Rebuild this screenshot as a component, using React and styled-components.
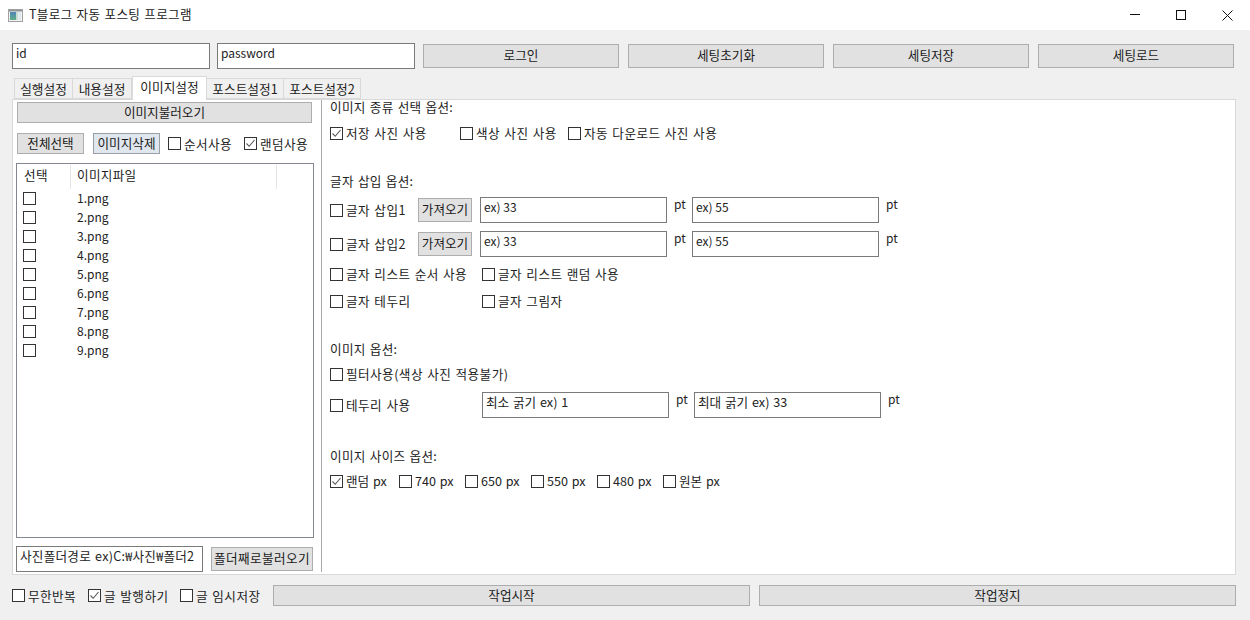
import React from "react";
import styled, { createGlobalStyle } from "styled-components";

const Global = createGlobalStyle`
  html, body { margin: 0; padding: 0; background: #f0f0f0; }
  * { box-sizing: border-box; }
  body { font-family: "Noto Sans CJK KR", "Noto Sans", sans-serif; font-size: 12.6px; color: #111; }
`;

const Window = styled.div`
  width: 1250px; height: 620px; overflow: hidden; background: #f0f0f0;
  display: flex; flex-direction: column; line-height: 16px;
`;
const TitleBar = styled.header`
  height: 30px; background: #fff; display: flex; align-items: center; padding-left: 8px;
`;
const TitleText = styled.span`
  margin-left: 6px; flex: 1; font-size: 12.6px; color: #222; letter-spacing: 0.3px; word-spacing: 1px;
  padding-bottom: 2px;
`;
const Ctrl = styled.span`
  width: 46px; height: 30px; display: flex; align-items: center; justify-content: center;
`;
const TopBar = styled.div`
  display: flex; align-items: center; margin-top: 13px; padding-left: 12px; height: 26px;
`;
const Field = styled.div`
  width: ${p => p.$w}px; height: 26px; flex: none; background: #fff; border: 1px solid #7a7a7a;
  padding: 1px 3px; margin-left: ${p => p.$ml || 0}px;
  font-size: ${p => p.$ko ? 12.6 : 12}px; letter-spacing: ${p => p.$ls || 0}px; word-spacing: ${p => p.$ko ? 1 : 0}px;
  line-height: 16px; color: #222; white-space: nowrap; overflow: hidden;
`;
const Btn = styled.button`
  width: ${p => p.$w}px; height: ${p => p.$h}px; flex: none; margin: 0 0 0 ${p => p.$ml || 0}px; padding: 0 0 1px;
  background: ${p => p.$focus ? "#dfe6ee" : "#e1e1e1"}; border: ${p => p.$focus ? "1px solid #9a9fa6" : "1px solid #adadad"};
  font: inherit; color: #1a1a1a; white-space: nowrap; display: block; line-height: 1;
  letter-spacing: ${p => p.$ls || 0}px;
`;
const TabBar = styled.div`
  display: flex; align-items: flex-end; height: 23px; margin-top: 7px; padding-left: 14px; font-size: 12.7px;
`;
const Tab = styled.div`
  width: ${p => p.$w}px; height: ${p => p.$active ? 24 : 21}px; flex: none; text-align: center;
  background: ${p => p.$active ? "#fff" : "#f0f0f0"}; border: 1px solid #d9d9d9;
  border-bottom: ${p => p.$active ? "none" : "1px solid #d9d9d9"}; border-left-width: ${p => p.$first || p.$active ? 1 : 0}px;
  line-height: ${p => p.$active ? 20 : 19}px; margin-bottom: ${p => p.$active ? -1 : 0}px;
  position: relative; z-index: ${p => p.$active ? 1 : 0}; color: #222;
`;
const Pane = styled.main`
  width: 1224px; height: 476px; margin-left: 12px; background: #fff; border: 1px solid #d9d9d9; display: flex;
`;
const LeftCol = styled.section`
  width: 309px; height: 472px; flex: none; border-right: 1px solid #a9a9a9; padding: 2px 0 0 3px;
  display: flex; flex-direction: column;
`;
const ActionRow = styled.div`
  display: flex; align-items: center; height: 21px; margin: 10px 0 0 1px;
`;
const ActionChecks = styled.div`
  display: flex; align-items: center; margin-left: 8px;
`;
const Table = styled.div`
  width: 298px; height: 375px; margin-top: 9px; border: 1px solid #828790; padding-top: 1px;
`;
const HeadRow = styled.div`
  display: grid; grid-template-columns: 54px 206px 1fr; height: 24px;
`;
const HeadCell = styled.div`
  border-right: 1px solid #e5e5e5; padding-left: ${p => p.$pl}px; line-height: 20px; color: #222;
  letter-spacing: 0.3px;
`;
const FileRow = styled.div`
  display: grid; grid-template-columns: 54px 1fr; height: 19px; padding-left: 6px; align-items: center;
`;
const FileName = styled.span`
  font-size: 12px; color: #222; line-height: 15px; height: 17px;
`;
const FolderRow = styled.div`
  display: flex; align-items: center; margin-top: 8px;
`;
const RightCol = styled.section`
  flex: 1; padding-left: 8px; display: flex; flex-direction: column;
`;
const Heading = styled.div`
  height: 16px; margin-top: ${p => p.$mt}px; color: #222; line-height: 16px;
  letter-spacing: 0.3px; word-spacing: 1px;
`;
const Row = styled.div`
  display: flex; align-items: center; height: ${p => p.$h || 16}px; margin-top: ${p => p.$mt}px;
`;
const CheckWrap = styled.label`
  display: flex; align-items: center; height: 16px; flex: none; width: ${p => p.$w ? `${p.$w}px` : "auto"};
  white-space: nowrap; color: #222; word-spacing: 1px;
  letter-spacing: ${p => p.$latin ? 0 : 0.45}px;
`;
const Box = styled.span`
  width: 13px; height: 13px; flex: none; border: 1px solid #333; background: #fff; margin-right: 3px;
  display: flex; align-items: center; justify-content: center;
`;
const Unit = styled.span`
  width: ${p => p.$w}px; flex: none; padding-left: 7px; align-self: flex-start; font-size: 12px; color: #222; line-height: 14px;
`;
const Bottom = styled.footer`
  display: flex; align-items: center; height: 21px; margin-top: 10px; padding-left: 12px;
`;

const Check = ({ label, w, on, latin }) => (
  <CheckWrap $w={w} $latin={latin}>
    <Box>
      {on && (
        <svg width="11" height="11" viewBox="0 0 11 11">
          <path d="M1.5 5.5 L4.2 8.3 L9.5 2" fill="none" stroke="#555" strokeWidth="1.1" />
        </svg>
      )}
    </Box>
    {label}
  </CheckWrap>
);

const AppIcon = () => (
  <svg width="15" height="13" viewBox="0 0 15 13">
    <defs>
      <linearGradient id="appIconFill" x1="0" y1="0" x2="0" y2="1">
        <stop offset="0" stopColor="#4f86b8" />
        <stop offset="1" stopColor="#5fae86" />
      </linearGradient>
    </defs>
    <rect x="0.5" y="0.5" width="14" height="12" fill="#f2f2f2" stroke="#a0a0a0" />
    <rect x="1" y="1" width="13" height="1.5" fill="#8f9499" />
    <rect x="2" y="3" width="6" height="8" fill="url(#appIconFill)" />
    <rect x="8" y="3" width="2" height="8" fill="#c8dcd0" />
    <rect x="10.5" y="3" width="2.5" height="8" fill="#dfe8ee" />
  </svg>
);

const files = ["1.png","2.png","3.png","4.png","5.png","6.png","7.png","8.png","9.png"];

export default function App() {
  return (
    <Window>
      <Global />
      <TitleBar>
        <AppIcon />
        <TitleText>T블로그 자동 포스팅 프로그램</TitleText>
        <Ctrl>
          <svg width="10" height="10" viewBox="0 0 10 10"><path d="M0 4.5H10" stroke="#111" /></svg>
        </Ctrl>
        <Ctrl>
          <svg width="10" height="10" viewBox="0 0 10 10"><rect x="0.5" y="0.5" width="9" height="9" fill="none" stroke="#111" /></svg>
        </Ctrl>
        <Ctrl>
          <svg width="11" height="11" viewBox="0 0 11 11"><path d="M0.5 0.5L10.5 10.5M10.5 0.5L0.5 10.5" stroke="#111" /></svg>
        </Ctrl>
      </TitleBar>

      <TopBar>
        <Field $w={198}>id</Field>
        <Field $w={198} $ml={7}>password</Field>
        <Btn $w={196} $h={24} $ml={8}>로그인</Btn>
        <Btn $w={196} $h={24} $ml={9}>세팅초기화</Btn>
        <Btn $w={196} $h={24} $ml={9}>세팅저장</Btn>
        <Btn $w={196} $h={24} $ml={9}>세팅로드</Btn>
      </TopBar>

      <TabBar>
        <Tab $w={59} $first>실행설정</Tab>
        <Tab $w={59}>내용설정</Tab>
        <Tab $w={75} $active>이미지설정</Tab>
        <Tab $w={77}>포스트설정1</Tab>
        <Tab $w={77}>포스트설정2</Tab>
      </TabBar>

      <Pane>
        <LeftCol>
          <Btn $w={295} $h={21} $ml={1}>이미지불러오기</Btn>
          <ActionRow>
            <Btn $w={67} $h={21}>전체선택</Btn>
            <Btn $w={67} $h={21} $ml={9} $focus>이미지삭제</Btn>
            <ActionChecks>
              <Check label="순서사용" w={76} />
              <Check label="랜덤사용" on />
            </ActionChecks>
          </ActionRow>
          <Table>
            <HeadRow>
              <HeadCell $pl={7}>선택</HeadCell>
              <HeadCell $pl={6}>이미지파일</HeadCell>
            </HeadRow>
            {files.map(f => (
              <FileRow key={f}>
                <Check label="" />
                <FileName>{f}</FileName>
              </FileRow>
            ))}
          </Table>
          <FolderRow>
            <Field $w={187} $ko $ls={0.25}>사진폴더경로 ex)C:₩사진₩폴더2</Field>
            <Btn $w={102} $h={24} $ml={8} $ls={0.4}>폴더째로불러오기</Btn>
          </FolderRow>
        </LeftCol>

        <RightCol>
          <Heading $mt={-1}>이미지 종류 선택 옵션:</Heading>
          <Row $mt={10}>
            <Check label="저장 사진 사용" w={130} on />
            <Check label="색상 사진 사용" w={108} />
            <Check label="자동 다운로드 사진 사용" />
          </Row>

          <Heading $mt={32}>글자 삽입 옵션:</Heading>
          <Row $mt={8} $h={26}>
            <Check label="글자 삽입1" w={88} />
            <Btn $w={54} $h={24}>가져오기</Btn>
            <Field $w={187} $ml={8}>ex) 33</Field>
            <Unit $w={25}>pt</Unit>
            <Field $w={187}>ex) 55</Field>
            <Unit $w={25}>pt</Unit>
          </Row>
          <Row $mt={8} $h={26}>
            <Check label="글자 삽입2" w={88} />
            <Btn $w={54} $h={24}>가져오기</Btn>
            <Field $w={187} $ml={8}>ex) 33</Field>
            <Unit $w={25}>pt</Unit>
            <Field $w={187}>ex) 55</Field>
            <Unit $w={25}>pt</Unit>
          </Row>
          <Row $mt={9}>
            <Check label="글자 리스트 순서 사용" w={152} />
            <Check label="글자 리스트 랜덤 사용" />
          </Row>
          <Row $mt={11}>
            <Check label="글자 테두리" w={152} />
            <Check label="글자 그림자" />
          </Row>

          <Heading $mt={32}>이미지 옵션:</Heading>
          <Row $mt={9}>
            <Check label="필터사용(색상 사진 적용불가)" />
          </Row>
          <Row $mt={10} $h={26}>
            <Check label="테두리 사용" w={152} />
            <Field $w={187} $ko>최소 굵기 ex) 1</Field>
            <Unit $w={25}>pt</Unit>
            <Field $w={187} $ko>최대 굵기 ex) 33</Field>
            <Unit $w={25}>pt</Unit>
          </Row>

          <Heading $mt={30}>이미지 사이즈 옵션:</Heading>
          <Row $mt={9}>
            <Check label="랜덤 px" w={69} on latin />
            <Check label="740 px" w={66} latin />
            <Check label="650 px" w={66} latin />
            <Check label="550 px" w={66} latin />
            <Check label="480 px" w={66} latin />
            <Check label="원본 px" latin />
          </Row>
        </RightCol>
      </Pane>

      <Bottom>
        <Check label="무한반복" w={76} />
        <Check label="글 발행하기" w={92} on />
        <Check label="글 임시저장" w={93} />
        <Btn $w={477} $h={21}>작업시작</Btn>
        <Btn $w={477} $h={21} $ml={9}>작업정지</Btn>
      </Bottom>
    </Window>
  );
}
